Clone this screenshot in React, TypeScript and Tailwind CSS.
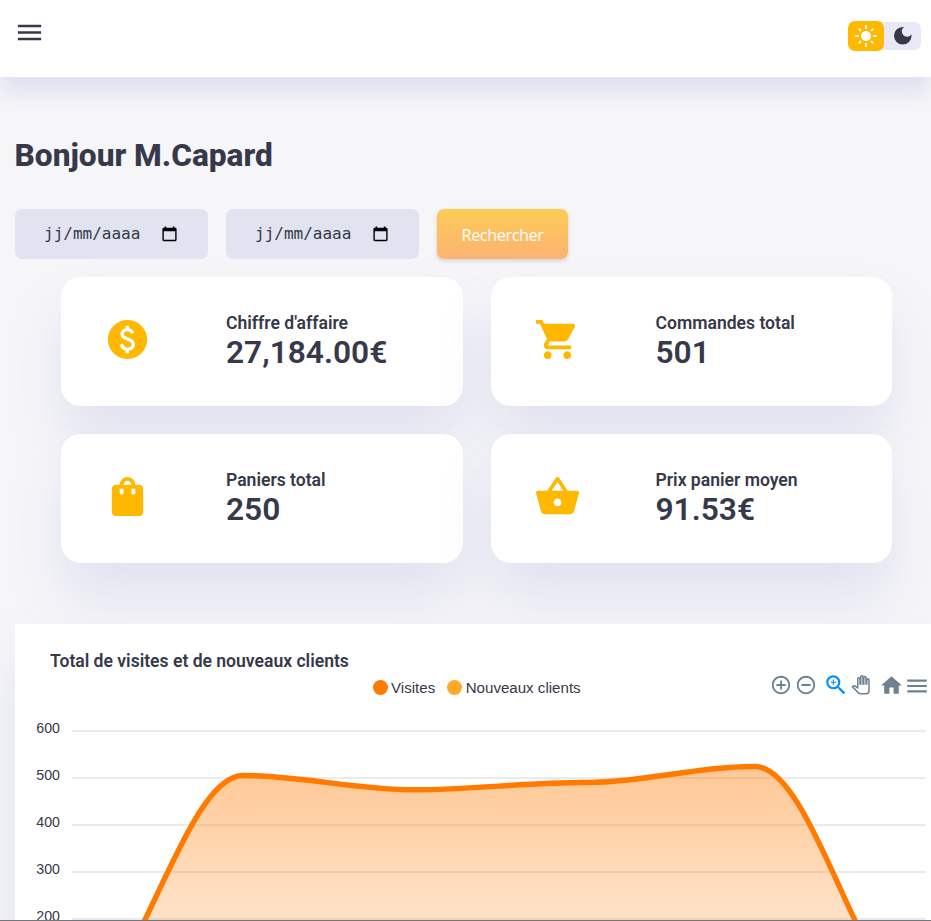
import type { ReactNode } from "react";
import {
  MdMenu,
  MdLightMode,
  MdDarkMode,
  MdShoppingCart,
  MdShoppingBasket,
  MdAddCircleOutline,
  MdRemoveCircleOutline,
  MdZoomIn,
  MdHome,
} from "react-icons/md";

function MoneyIcon() {
  return (
    <svg viewBox="0 0 24 24" className="size-[47px]" fill="currentColor">
      <circle cx="12" cy="12" r="10" />
      <path
        fill="#fff"
        d="M11.025 19H12.75V17.75Q14 17.525 14.9 16.775Q15.8 16.025 15.8 14.55Q15.8 13.5 15.2 12.625Q14.6 11.75 12.8 11.1Q11.3 10.6 10.725 10.225Q10.15 9.85 10.15 9.2Q10.15 8.55 10.613 8.175Q11.075 7.8 11.95 7.8Q12.75 7.8 13.2 8.187Q13.65 8.575 13.85 9.15L15.45 8.5Q15.175 7.625 14.438 6.975Q13.7 6.325 12.8 6.25V5H11.05V6.25Q9.8 6.525 9.1 7.35Q8.4 8.175 8.4 9.2Q8.4 10.375 9.088 11.1Q9.775 11.825 11.25 12.35Q12.825 12.925 13.438 13.375Q14.05 13.825 14.05 14.55Q14.05 15.375 13.463 15.762Q12.875 16.15 12.05 16.15Q11.225 16.15 10.588 15.637Q9.95 15.125 9.65 14.1L8 14.75Q8.35 15.95 9.088 16.688Q9.825 17.425 11.025 17.7Z"
      />
    </svg>
  );
}

function BagIcon() {
  return (
    <svg viewBox="0 0 24 24" className="size-[47px]" fill="currentColor">
      <path d="M6 22q-.825 0-1.412-.587Q4 20.825 4 20V8q0-.825.588-1.412Q5.175 6 6 6h2q0-1.65 1.175-2.825Q10.35 2 12 2q1.65 0 2.825 1.175Q16 4.35 16 6h2q.825 0 1.413.588Q20 7.175 20 8v12q0 .825-.587 1.413Q18.825 22 18 22Zm4-16h4q0-.825-.587-1.412Q12.825 4 12 4q-.825 0-1.412.588Q10 5.175 10 6Zm5 5q.425 0 .713-.288Q16 10.425 16 10V8h-2v2q0 .425.288.712Q14.575 11 15 11Zm-6 0q.425 0 .713-.288Q10 10.425 10 10V8H8v2q0 .425.288.712Q8.575 11 9 11Z" />
    </svg>
  );
}

function CalendarIcon() {
  return (
    <svg viewBox="0 0 15 16" className="h-4 w-[15px] shrink-0" fill="#000">
      <path
        fillRule="evenodd"
        d="M2.6 .4h1.6v1.4h6.6V.4h1.6v1.4h.8c.8 0 1.4.6 1.4 1.4v10.6c0 .8-.6 1.4-1.4 1.4H1.8c-.8 0-1.4-.6-1.4-1.4V3.2c0-.8.6-1.4 1.4-1.4h.8zM1.8 5.3v8.5h11.4V5.3z"
      />
    </svg>
  );
}

function PanIcon() {
  return (
    <svg viewBox="-1 -1 26 26" className="h-[19.5px] w-[19.5px]" fill="#fff" stroke="#6e8192" strokeWidth="2">
      <path d="M23 5.5V20c0 2.2-1.8 4-4 4h-7.3c-1.08 0-2.1-.43-2.85-1.19L1 14.83s1.26-1.23 1.3-1.25c.22-.19.49-.29.79-.29.22 0 .42.06.6.16.04.01 4.31 2.46 4.31 2.46V4c0-.83.67-1.5 1.5-1.5S11 3.17 11 4v7h1V1.5c0-.83.67-1.5 1.5-1.5S15 .67 15 1.5V11h1V2.5c0-.83.67-1.5 1.5-1.5s1.5.67 1.5 1.5V11h1V5.5c0-.83.67-1.5 1.5-1.5s1.5.67 1.5 1.5z" />
    </svg>
  );
}

function DateField() {
  return (
    <div className="flex h-[50px] w-[193px] items-center justify-between rounded-[7px] bg-[#e1e3f0] pr-[31px] pl-[29px]">
      <span className="font-['DejaVu_Sans_Mono',monospace] text-[16px]">jj/mm/aaaa</span>
      <CalendarIcon />
    </div>
  );
}

function StatCard({ icon, label, value }: { icon: ReactNode; label: string; value: string }) {
  return (
    <div className="flex h-[129px] items-center rounded-[20px] bg-white pl-[43px] shadow-[0_35px_53px_rgba(132,139,200,0.18)]">
      <div className="w-[122px] pb-[5px] text-[47px] text-[#ffb800]">{icon}</div>
      <div className="pb-px">
        <h3 className="text-[17.6px] leading-[22px] font-semibold tracking-[-0.02px]">{label}</h3>
        <p className="text-[31.7px] leading-[37px] font-semibold">{value}</p>
      </div>
    </div>
  );
}

function VisitsChart() {
  const ticks = [600, 500, 400, 300, 200];
  const curve =
    "M72 388 C131.8 388 183 151.5 242.8 151.5 C302.6 151.5 353.8 165.8 413.6 165.8 C473.4 165.8 524.6 158.5 584.4 158.5 C644.2 158.5 695.4 142.5 755.2 142.5 C815 142.5 866.2 388 926 388";
  return (
    <svg viewBox="15 0 916 297" className="block h-[297px] w-[916px]">
      <defs>
        <linearGradient id="visits" x1="0" y1="142" x2="0" y2="388" gradientUnits="userSpaceOnUse">
          <stop offset="0" stopColor="#ff7a00" stopOpacity="0.42" />
          <stop offset="1" stopColor="#ff7a00" stopOpacity="0.09" />
        </linearGradient>
      </defs>
      {ticks.map((t, i) => (
        <g key={t}>
          <rect x="72" y={106 + i * 47} width="854" height="2" fill="#ebebeb" />
          <text
            x="60"
            y={109 + i * 47}
            textAnchor="end"
            fontSize="14.2"
            fill="#363949"
            className="font-['Liberation_Sans',Arial,sans-serif]"
          >
            {t}
          </text>
        </g>
      ))}
      <path d={`${curve} Z`} fill="url(#visits)" />
      <path d={curve} fill="none" stroke="#ff7a00" strokeWidth="5.4" />
    </svg>
  );
}

export default function App() {
  return (
    <div className="flex h-[921px] w-[931px] flex-col overflow-hidden bg-[#f6f6f9] font-[Roboto,sans-serif] text-[#363949]">
      <nav className="relative z-10 flex h-[77px] shrink-0 items-start justify-between bg-white pr-[10px] pl-[14px] shadow-[0_17.6px_17.6px_rgba(132,139,200,0.18)]">
        <MdMenu className="mt-[17px] size-[31px]" />
        <div className="mt-[21px] flex items-center">
          <div className="z-10 flex h-[30px] w-9 items-center justify-center rounded-[7px] bg-[#ffb800]">
            <MdLightMode className="size-6 text-white" />
          </div>
          <div className="-ml-2 flex h-7 w-[45px] items-center justify-center rounded-r-[7px] bg-[#e9e9f5] pl-[9px]">
            <MdDarkMode className="size-[23.5px]" />
          </div>
        </div>
      </nav>

      <main className="flex min-h-0 flex-1 flex-col overflow-hidden pl-[15px]">
        <h1 className="mt-[60px] -ml-[0.5px] text-[31.7px] leading-[38px] font-extrabold tracking-[-0.03px]">
          Bonjour M.Capard
        </h1>
        <div className="mt-[34px] flex shrink-0 gap-[18px]">
          <DateField />
          <DateField />
          <button className="h-[50px] w-[131px] rounded-[7px] bg-linear-to-b from-[#fccc53] to-[#fdb272] pt-[2px] font-['Open_Sans',sans-serif] text-[16.3px] tracking-[-0.45px] text-white shadow-[0_2px_4px_rgba(0,0,0,0.15)]">
            Rechercher
          </button>
        </div>

        <section className="mt-[18px] mr-[39px] ml-[46px] grid shrink-0 grid-cols-2 gap-7">
          <StatCard icon={<MoneyIcon />} label="Chiffre d'affaire" value="27,184.00€" />
          <StatCard icon={<MdShoppingCart />} label="Commandes total" value="501" />
          <StatCard icon={<BagIcon />} label="Paniers total" value="250" />
          <StatCard icon={<MdShoppingBasket />} label="Prix panier moyen" value="91.53€" />
        </section>

        <section className="relative mt-[61px] h-[450px] w-[930px] shrink-0 bg-white shadow-[0_35px_53px_rgba(132,139,200,0.18)]">
          <VisitsChart />
          <h2 className="absolute top-[26px] left-[35px] text-[17.6px] leading-[22px] font-semibold tracking-[-0.02px]">
            Total de visites et de nouveaux clients
          </h2>
          <div className="absolute top-[53.5px] left-[357.5px] flex items-center font-['Liberation_Sans',Arial,sans-serif] text-[15.1px] leading-5">
            <span className="mr-[3.5px] size-[15px] rounded-full bg-[#ff7a00]" />
            Visites
            <span className="mr-[3.5px] ml-3 size-[15px] rounded-full bg-[#ffa92b]" />
            Nouveaux clients
          </div>
          <div className="absolute top-[48px] left-[755px] flex h-[26px] items-center text-[#6e8192]">
            <MdAddCircleOutline className="size-[22px]" />
            <MdRemoveCircleOutline className="ml-[3px] size-[22px]" />
            <MdZoomIn className="ml-[6px] size-[26px] text-[#008ffb]" />
            <span className="ml-[2px]">
              <PanIcon />
            </span>
            <MdHome className="ml-[8px] size-[25px]" />
            <MdMenu className="mt-px size-[26px]" />
          </div>
        </section>
      </main>
      <div className="h-px shrink-0 bg-[#76767a]" />
    </div>
  );
}
